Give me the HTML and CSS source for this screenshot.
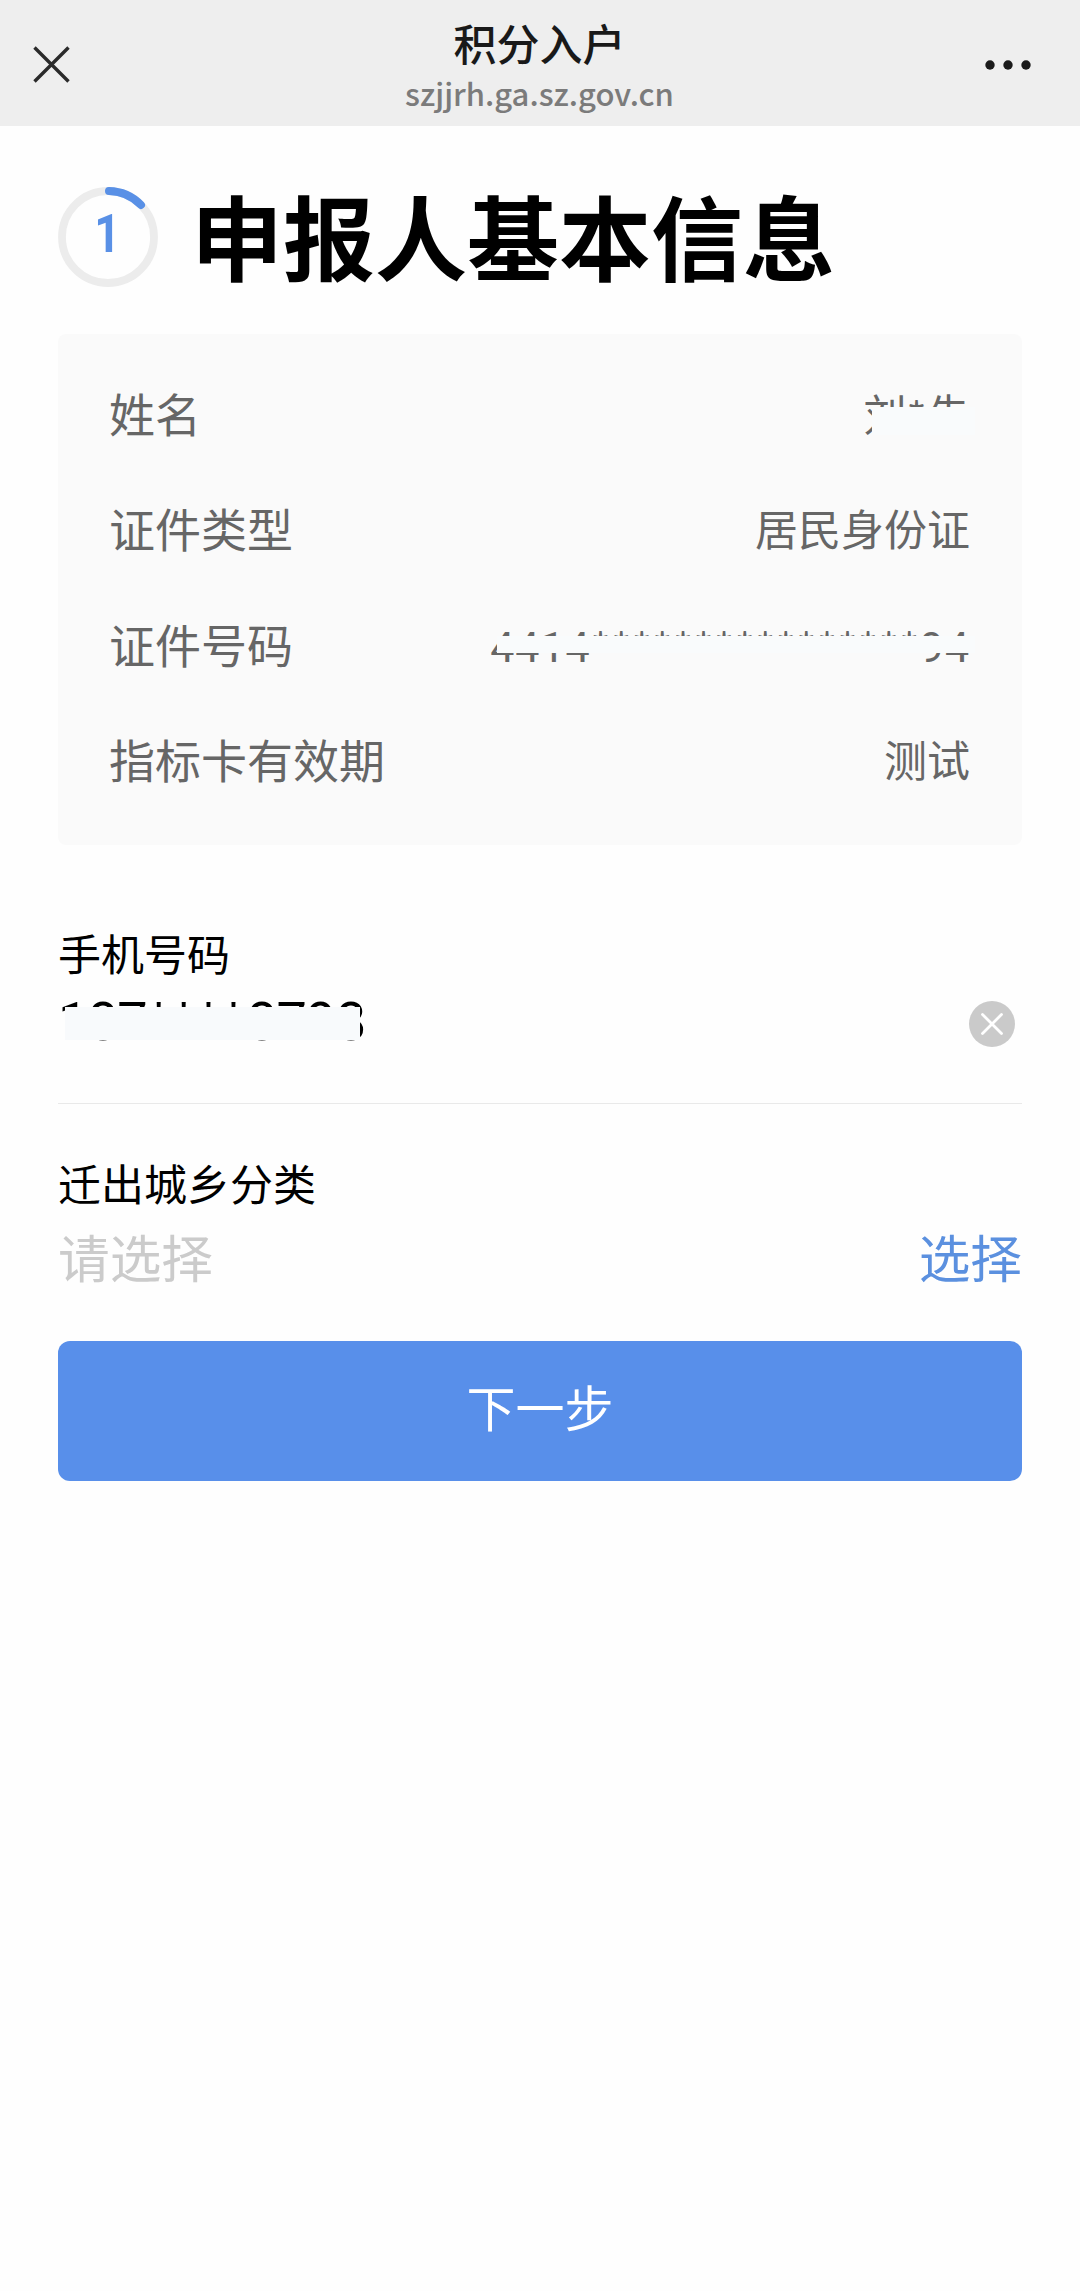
FILE: index.html
```html
<!DOCTYPE html>
<html lang="zh-CN">
<head>
<meta charset="utf-8">
<title>积分入户</title>
<link rel="stylesheet" href="styles.css">
</head>
<body>
<header class="nav">
  <svg class="nav-close" width="37" height="37" viewBox="0 0 37 37"><path d="M1.5 1.5 35.5 35.5M35.5 1.5 1.5 35.5"/></svg>
  <div class="nav-titles">
    <div class="nav-title">积分入户</div>
    <div class="nav-url">szjjrh.ga.sz.gov.cn</div>
  </div>
  <svg class="nav-more" width="46" height="10" viewBox="0 0 46 10"><circle cx="5" cy="5" r="4.7"/><circle cx="23" cy="5" r="4.7"/><circle cx="41" cy="5" r="4.7"/></svg>
</header>
<main class="page">
  <div class="step">
    <div class="step-ring">
      <svg width="100" height="100" viewBox="0 0 100 100"><circle class="ring-track" cx="50" cy="50" r="46"/><path class="ring-arc" d="M51 4A46 46 0 0 1 83 18"/></svg>
      <span class="step-number">1</span>
    </div>
    <h1 class="step-title">申报人基本信息</h1>
  </div>
  <section class="card">
    <div class="row"><span class="row-label">姓名</span><span class="row-value">刘<span class="stars">*</span>先<i class="mask mask-name"></i></span></div>
    <div class="row"><span class="row-label">证件类型</span><span class="row-value">居民身份证</span></div>
    <div class="row"><span class="row-label">证件号码</span><span class="row-value"><span class="digits">4414</span><span class="stars">****************</span><span class="digits">94</span><i class="mask mask-id"></i></span></div>
    <div class="row"><span class="row-label">指标卡有效期</span><span class="row-value">测试</span></div>
  </section>
  <section class="field field-phone">
    <div class="field-label">手机号码</div>
    <div class="field-line">
      <span class="phone">187<span class="phone-stars">****</span>8798<i class="mask mask-phone"></i></span>
      <svg class="clear" width="46" height="46" viewBox="0 0 46 46"><circle cx="23" cy="23" r="23"/><path d="M13.5 13.5 32.5 32.5M32.5 13.5 13.5 32.5"/></svg>
    </div>
  </section>
  <section class="field field-type">
    <div class="field-label">迁出城乡分类</div>
    <div class="field-line">
      <span class="placeholder">请选择</span>
      <span class="choose">选择</span>
    </div>
  </section>
  <button class="next">下一步</button>
</main>
</body>
</html>
```
FILE: styles.css
```css
* { box-sizing: border-box; }
body {
  margin: 0;
  min-height: 2291px;
  background: #fefefe;
  color: #000;
  font-family: "Noto Sans CJK SC", sans-serif;
}
.nav {
  display: flex;
  justify-content: space-between;
  align-items: center;
  height: 126px;
  padding: 3px 49px 0 33px;
  background: #eee;
}
.nav-close { stroke: #2a2a2a; stroke-width: 3.4; }
.nav-more { fill: #1a1a1a; }
.nav-titles {
  display: flex;
  flex-direction: column;
  align-items: center;
  margin-left: 24px;
}
.nav-title {
  color: #191919;
  font-size: 43px;
  font-weight: 500;
  line-height: 56px;
}
.nav-url {
  color: #7b7b7b;
  font-size: 31px;
  font-weight: 500;
  line-height: 46px;
}
.page { padding: 0 58px; }
.step {
  display: flex;
  align-items: center;
  height: 208px;
  gap: 33px;
  padding-top: 14px;
}
.step-ring {
  display: grid;
  place-items: center;
  width: 100px;
  height: 100px;
}
.step-ring > * { grid-area: 1 / 1; }
.ring-track { fill: none; stroke: #ececec; stroke-width: 7.8; }
.ring-arc { fill: none; stroke: #5990e6; stroke-width: 8; stroke-linecap: round; }
.step-number {
  padding: 0 2px 6px 0;
  color: #5990e6;
  font: bold 53px/60px Roboto, sans-serif;
  transform: scaleX(0.86);
}
.step-title {
  margin: 0;
  padding-bottom: 6px;
  font-size: 92px;
  font-weight: 700;
  line-height: 110px;
}
.card {
  height: 511px;
  padding: 21px 52px 0 51px;
  border-radius: 8px;
  background: #fafafa;
  color: #666;
}
.row {
  display: flex;
  justify-content: space-between;
  height: 115.4px;
  line-height: 115px;
}
.row-label { font-size: 46px; }
.row-value { position: relative; font-size: 43px; }
.digits {
  font-family: Roboto, sans-serif;
  letter-spacing: 0.9px;
}
.stars {
  position: relative;
  top: 3px;
  letter-spacing: 0.5px;
}
.mask { position: absolute; background: #f9fbfc; }
.mask-name { left: 9px; right: -5px; top: 52px; height: 28px; }
.mask-id { left: 7px; right: -5px; top: 50px; height: 17px; }
.field-label { font-size: 43px; line-height: 64px; }
.field-line {
  display: flex;
  justify-content: space-between;
  align-items: center;
}
.field-phone {
  height: 259px;
  padding-top: 75px;
  border-bottom: 1px solid #e9e9e9;
}
.field-phone .field-line { height: 80px; padding-right: 7px; }
.phone {
  position: relative;
  padding-bottom: 4px;
  font: 54px/76px Roboto, sans-serif;
  letter-spacing: -0.7px;
}
.phone-stars { letter-spacing: 1.7px; }
.mask-phone { left: 7px; right: 5px; top: 23px; height: 33px; background: #f8fafc; }
.clear circle { fill: #cacaca; }
.clear path { stroke: #fff; stroke-width: 2.8; stroke-linecap: round; }
.field-type { height: 237px; padding-top: 46px; }
.field-type .field-line { height: 82px; font-size: 51.7px; }
.placeholder { color: #cbcbcb; }
.choose { color: #5b90df; }
.next {
  display: block;
  width: 100%;
  height: 140px;
  padding: 0 0 12px;
  border: 0;
  border-radius: 12px;
  background: #588fea;
  color: #fff;
  font: 400 49px "Noto Sans CJK SC", sans-serif;
}
```
